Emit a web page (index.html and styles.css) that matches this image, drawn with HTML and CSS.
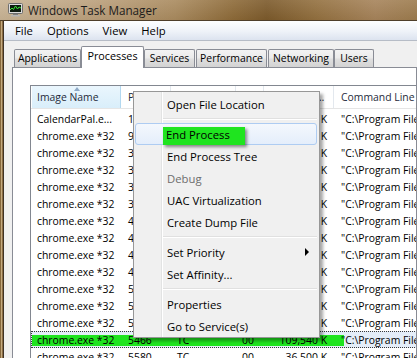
FILE: index.html
```html
<!DOCTYPE html>
<html>
<head>
<meta charset="utf-8">
<title>Windows Task Manager</title>
<link rel="stylesheet" href="styles.css">
</head>
<body>
<div class="screen">
  <div class="titlebar">
    <svg class="appicon" width="15" height="14" viewBox="0 0 15 14">
      <rect x="0.5" y="0.5" width="14" height="10" rx="1" fill="#dcdcdc" stroke="#6e6e6e"/>
      <rect x="2" y="2" width="11" height="7" fill="#0d1a10"/>
      <polyline points="2,7 4,5 5.5,6.5 7.5,3 9.5,6 11,4 13,5" fill="none" stroke="#35e835" stroke-width="1"/>
      <rect x="5" y="11" width="5" height="1" fill="#7d7d7d"/>
      <rect x="3" y="12" width="9" height="1.5" fill="#b4b4b4"/>
    </svg>
    <span class="title">Windows Task Manager</span>
  </div>
  <div class="frame">
    <div class="edge"></div>
    <div class="client">
      <div class="menubar">
        <span>File</span><span>Options</span><span>View</span><span>Help</span>
      </div>
      <div class="tabarea">
        <div class="tabs">
          <div class="tab t-app">Applications</div>
          <div class="tab sel t-proc">Processes</div>
          <div class="tab t-serv">Services</div>
          <div class="tab t-perf">Performance</div>
          <div class="tab t-net">Networking</div>
          <div class="tab t-user">Users</div>
        </div>
        <div class="panel">
          <div class="list">
            <div class="hdr">
              <div class="h c-name sorted">Image Name</div>
              <div class="h c-pid">PID</div>
              <div class="h c-user">User Name</div>
              <div class="h c-cpu">CPU</div>
              <div class="h c-mem">Memory (Private Working Set)</div>
              <div class="h c-cmd">Command Line</div>
            </div>
            <div class="rows">
              <div class="row"><div class="c c-name">CalendarPal.e...</div><div class="c c-pid">1052</div><div class="c c-user">TC</div><div class="c c-cpu">00</div><div class="c c-mem">2,148 K</div><div class="c c-cmd">"C:\Program Files (x86)\CalendarPal\CalendarPal.exe"</div></div>
              <div class="row"><div class="c c-name">chrome.exe *32</div><div class="c c-pid">9724</div><div class="c c-user">TC</div><div class="c c-cpu">00</div><div class="c c-mem">41,280 K</div><div class="c c-cmd">"C:\Program Files (x86)\Google\Chrome\Application\chrome.exe"</div></div>
              <div class="row"><div class="c c-name">chrome.exe *32</div><div class="c c-pid">3012</div><div class="c c-user">TC</div><div class="c c-cpu">00</div><div class="c c-mem">18,904 K</div><div class="c c-cmd">"C:\Program Files (x86)\Google\Chrome\Application\chrome.exe"</div></div>
              <div class="row"><div class="c c-name">chrome.exe *32</div><div class="c c-pid">3148</div><div class="c c-user">TC</div><div class="c c-cpu">00</div><div class="c c-mem">22,516 K</div><div class="c c-cmd">"C:\Program Files (x86)\Google\Chrome\Application\chrome.exe"</div></div>
              <div class="row"><div class="c c-name">chrome.exe *32</div><div class="c c-pid">3360</div><div class="c c-user">TC</div><div class="c c-cpu">00</div><div class="c c-mem">30,772 K</div><div class="c c-cmd">"C:\Program Files (x86)\Google\Chrome\Application\chrome.exe"</div></div>
              <div class="row"><div class="c c-name">chrome.exe *32</div><div class="c c-pid">3512</div><div class="c c-user">TC</div><div class="c c-cpu">00</div><div class="c c-mem">12,060 K</div><div class="c c-cmd">"C:\Program Files (x86)\Google\Chrome\Application\chrome.exe"</div></div>
              <div class="row"><div class="c c-name">chrome.exe *32</div><div class="c c-pid">4076</div><div class="c c-user">TC</div><div class="c c-cpu">00</div><div class="c c-mem">25,344 K</div><div class="c c-cmd">"C:\Program Files (x86)\Google\Chrome\Application\chrome.exe"</div></div>
              <div class="row"><div class="c c-name">chrome.exe *32</div><div class="c c-pid">4232</div><div class="c c-user">TC</div><div class="c c-cpu">00</div><div class="c c-mem">16,128 K</div><div class="c c-cmd">"C:\Program Files (x86)\Google\Chrome\Application\chrome.exe"</div></div>
              <div class="row"><div class="c c-name">chrome.exe *32</div><div class="c c-pid">4480</div><div class="c c-user">TC</div><div class="c c-cpu">00</div><div class="c c-mem">9,876 K</div><div class="c c-cmd">"C:\Program Files (x86)\Google\Chrome\Application\chrome.exe"</div></div>
              <div class="row"><div class="c c-name">chrome.exe *32</div><div class="c c-pid">4616</div><div class="c c-user">TC</div><div class="c c-cpu">00</div><div class="c c-mem">33,412 K</div><div class="c c-cmd">"C:\Program Files (x86)\Google\Chrome\Application\chrome.exe"</div></div>
              <div class="row"><div class="c c-name">chrome.exe *32</div><div class="c c-pid">5024</div><div class="c c-user">TC</div><div class="c c-cpu">00</div><div class="c c-mem">14,236 K</div><div class="c c-cmd">"C:\Program Files (x86)\Google\Chrome\Application\chrome.exe"</div></div>
              <div class="row"><div class="c c-name">chrome.exe *32</div><div class="c c-pid">5176</div><div class="c c-user">TC</div><div class="c c-cpu">00</div><div class="c c-mem">27,908 K</div><div class="c c-cmd">"C:\Program Files (x86)\Google\Chrome\Application\chrome.exe"</div></div>
              <div class="row"><div class="c c-name">chrome.exe *32</div><div class="c c-pid">5392</div><div class="c c-user">TC</div><div class="c c-cpu">00</div><div class="c c-mem">19,560 K</div><div class="c c-cmd">"C:\Program Files (x86)\Google\Chrome\Application\chrome.exe"</div></div>
              <div class="row sel"><span class="mark-row"></span><div class="c c-name">chrome.exe *32</div><div class="c c-pid">5466</div><div class="c c-user">TC</div><div class="c c-cpu">00</div><div class="c c-mem">109,540 K</div><div class="c c-cmd">"C:\Program Files (x86)\Google\Chrome\Application\chrome.exe"</div></div>
              <div class="row"><div class="c c-name">chrome.exe *32</div><div class="c c-pid">5580</div><div class="c c-user">TC</div><div class="c c-cpu">00</div><div class="c c-mem">36,500 K</div><div class="c c-cmd">"C:\Program Files (x86)\Google\Chrome\Application\chrome.exe"</div></div>
            </div>
          </div>
        </div>
      </div>
    </div>
  </div>

  <div class="ctx">
    <div class="mi">Open File Location</div>
    <div class="sep"></div>
    <div class="mi hot"><span class="mark"></span><span class="lbl">End Process</span></div>
    <div class="mi">End Process Tree</div>
    <div class="mi dis">Debug</div>
    <div class="mi">UAC Virtualization</div>
    <div class="mi">Create Dump File</div>
    <div class="sep"></div>
    <div class="mi">Set Priority<span class="sub"></span></div>
    <div class="mi">Set Affinity...</div>
    <div class="sep"></div>
    <div class="mi">Properties</div>
    <div class="mi">Go to Service(s)</div>
  </div>
</div>
</body>
</html>
```
FILE: styles.css
```css
html, body {
  margin: 0;
  padding: 0;
}
body {
  width: 417px;
  height: 358px;
  overflow: hidden;
  font-family: "Open Sans", "Noto Sans", sans-serif;
  font-size: 11.3px;
  color: #000;
  background: #f0f0f0;
}
.screen {
  position: relative;
  width: 417px;
  height: 358px;
  overflow: hidden;
}

/* title bar */
.titlebar {
  box-sizing: border-box;
  height: 21px;
  border-bottom: 1px solid #4e3e2a;
  display: flex;
  align-items: center;
  gap: 5px;
  padding-left: 8px;
  background:
    linear-gradient(180deg, rgba(255,255,255,0.10), rgba(0,0,0,0.04)),
    linear-gradient(90deg, #c8b394 0%, #bba07c 22%, #a98a5e 42%, #8d6a38 56%, #7c5a2b 64%, #93703f 76%, #a6835a 90%, #9c7b4d 100%);
}
.appicon {
  flex: none;
  margin-top: -1px;
}
.title {
  font-size: 11.7px;
  color: #1c1c1c;
  margin-top: -1px;
}

/* frame */
.frame {
  display: flex;
  height: 337px;
}
.edge {
  width: 4px;
  flex: none;
  background: linear-gradient(90deg, #86673b 0 1px, #c3aa80 1px 2.5px, #8a6c44 2.5px 3px, #3e3226 3px 4px);
}
.client {
  flex: 1;
  min-width: 0;
  overflow: hidden;
  display: flex;
  flex-direction: column;
}
.menubar {
  height: 19px;
  flex: none;
  border-bottom: 1px solid #b6bcc6;
  background: linear-gradient(180deg, #fdfeff 0%, #eef2f8 55%, #dce3ef 100%);
  display: flex;
  align-items: center;
  padding-left: 4px;
}
.menubar span {
  padding: 0 7px;
}

/* tabs */
.tabarea {
  flex: 1;
  display: flex;
  flex-direction: column;
  background: #f0f0f0;
  padding: 5px 0 0 8px;
  font-size: 10.4px;
}
.tabs {
  display: flex;
  align-items: flex-end;
  height: 21px;
  padding-left: 2px;
  flex: none;
}
.tab {
  box-sizing: border-box;
  height: 18px;
  border: 1px solid #898c95;
  border-bottom: none;
  border-radius: 2px 2px 0 0;
  background: linear-gradient(180deg, #f3f3f3 0%, #ebebeb 45%, #dedede 55%, #d3d3d3 100%);
  display: flex;
  align-items: center;
  justify-content: center;
  padding-bottom: 1px;
  white-space: nowrap;
}
.tab.sel {
  height: 22px;
  margin-bottom: -1px;
  background: #fff;
  position: relative;
  z-index: 1;
  padding-bottom: 4px;
  font-size: 10.8px;
}
.t-app { width: 67px; }
.t-proc { width: 63px; }
.t-serv { width: 51px; }
.t-perf { width: 71px; margin-left: 1px; }
.t-net { width: 66px; margin-left: 1px; }
.t-user { width: 40px; }

.panel {
  flex: 1;
  border: 1px solid #898c95;
  background: #fff;
  padding: 17px 0 0 17px;
  overflow: hidden;
}

/* list */
.list {
  width: 600px;
  height: 400px;
  border: 1px solid #828790;
  background: #fff;
}
.hdr {
  display: flex;
  height: 22px;
  border-bottom: 1px solid #e5e5e5;
}
.h {
  box-sizing: border-box;
  border-right: 1px solid #e3e8ee;
  display: flex;
  align-items: center;
  padding-left: 6px;
  white-space: nowrap;
  overflow: hidden;
  text-overflow: ellipsis;
  color: #1e2a3a;
}
.h.c-mem {
  display: block;
  line-height: 22px;
  padding-right: 6px;
}
.h.sorted {
  position: relative;
  background: linear-gradient(180deg, #eaf6fd 0%, #d9eefa 100%);
  border-right: 1px solid #b2d8f0;
  margin-left: 1px;
  padding-left: 5px;
}
.h.sorted::before {
  content: "";
  position: absolute;
  left: 42px;
  top: 1px;
  border-left: 3.5px solid transparent;
  border-right: 3.5px solid transparent;
  border-bottom: 4px solid #8fa9c6;
}
.rows {
  padding-top: 1px;
}
.row {
  position: relative;
  display: flex;
  height: 17px;
  align-items: center;
  white-space: nowrap;
}
.c {
  box-sizing: border-box;
  position: relative;
  z-index: 1;
  overflow: hidden;
}
.c-name { width: 90px; padding-left: 6px; }
.h.c-name { width: 89px; }
.c-pid { width: 50px; padding-left: 7px; }
.c-user { width: 65px; padding-left: 6px; }
.c-cpu { width: 28px; padding-left: 6px; }
.c-mem { width: 70px; padding-right: 7px; text-align: right; }
.c-cmd { width: 250px; padding-left: 7px; }
.h.c-cmd { padding-left: 7px; }

.row.sel {
  background: #e4edf8;
  outline: 1px dotted #3a3a3a;
  outline-offset: -1px;
}
.mark-row {
  position: absolute;
  left: 1px;
  top: 4px;
  width: 312px;
  height: 11px;
  background: #1fe41f;
}

/* context menu */
.ctx {
  position: absolute;
  left: 133px;
  top: 91px;
  width: 187px;
  box-sizing: border-box;
  border: 1px solid #979797;
  padding: 1px 2px 0 2px;
  background: linear-gradient(90deg, #f0f0f0 0 27px, #e2e3e3 27px 28px, #ffffff 28px 29px, #f0f0f0 29px);
  box-shadow: 3px 3px 3px rgba(0, 0, 0, 0.35);
  z-index: 10;
}
.mi {
  position: relative;
  height: 22px;
  box-sizing: border-box;
  display: flex;
  align-items: center;
  padding-left: 31px;
  white-space: nowrap;
}
.mi.dis {
  color: #6d6d6d;
}
.mi.hot {
  border: 1px solid #aeccf2;
  border-radius: 3px;
  background: linear-gradient(180deg, #f4f8fd 0%, #e4eefb 100%);
  padding-left: 30px;
  margin-left: -1px;
}
.mark {
  position: absolute;
  left: 27px;
  top: 3px;
  width: 82px;
  height: 18px;
  background: #1fe41f;
  box-shadow: 2px 2px 3px rgba(0, 0, 0, 0.45);
}
.lbl {
  position: relative;
  z-index: 1;
}
.sub {
  margin-left: auto;
  margin-right: 8px;
  width: 0;
  height: 0;
  border-left: 4px solid #000;
  border-top: 4px solid transparent;
  border-bottom: 4px solid transparent;
}
.sep {
  height: 8px;
  margin-left: 27px;
  background: linear-gradient(180deg, transparent 3px, #e0e0e0 3px 4px, #ffffff 4px 5px, transparent 5px);
}
```
